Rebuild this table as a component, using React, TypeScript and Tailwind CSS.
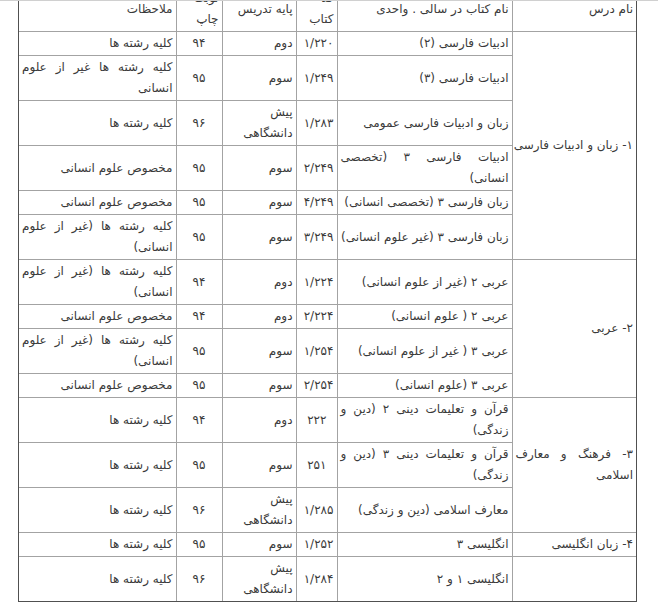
import React from "react";

type Row = {
  book: string[];
  bookJustify?: boolean;
  code: string;
  codePad?: boolean;
  grade: string[];
  print: string;
  note: string[];
};

type Group = { title: string[]; rows: Row[] };

const groups: Group[] = [
  {
    title: ["۱- زبان و ادبیات فارسی"],
    rows: [
      { book: ["ادبیات فارسی (۲)"], code: "۱/۲۲۰", grade: ["دوم"], print: "۹۴", note: ["کلیه رشته ها"] },
      { book: ["ادبیات فارسی (۳)"], code: "۱/۲۴۹", grade: ["سوم"], print: "۹۵", note: ["کلیه رشته ها غیر از علوم", "انسانی"] },
      { book: ["زبان و ادبیات فارسی عمومی"], code: "۱/۲۸۳", grade: ["پیش", "دانشگاهی"], print: "۹۶", note: ["کلیه رشته ها"] },
      { book: ["ادبیات فارسی ۳ (تخصصی", "انسانی)"], code: "۲/۲۴۹", grade: ["سوم"], print: "۹۵", note: ["مخصوص علوم انسانی"] },
      { book: ["زبان فارسی ۳ (تخصصی انسانی)"], code: "۴/۲۴۹", grade: ["سوم"], print: "۹۵", note: ["مخصوص علوم انسانی"] },
      { book: ["زبان فارسی ۳ (غیر علوم انسانی)"], code: "۳/۲۴۹", grade: ["سوم"], print: "۹۵", note: ["کلیه رشته ها (غیر از علوم", "انسانی)"] },
    ],
  },
  {
    title: ["۲- عربی"],
    rows: [
      { book: ["عربی ۲ (غیر از علوم انسانی)"], code: "۱/۲۲۴", grade: ["دوم"], print: "۹۴", note: ["کلیه رشته ها (غیر از علوم", "انسانی)"] },
      { book: ["عربی ۲ ( علوم انسانی)"], code: "۲/۲۲۴", grade: ["دوم"], print: "۹۴", note: ["مخصوص علوم انسانی"] },
      { book: ["عربی ۳ ( غیر از علوم انسانی)"], code: "۱/۲۵۴", grade: ["سوم"], print: "۹۵", note: ["کلیه رشته ها (غیر از علوم", "انسانی)"] },
      { book: ["عربی ۳ (علوم انسانی)"], code: "۲/۲۵۴", grade: ["سوم"], print: "۹۵", note: ["مخصوص علوم انسانی"] },
    ],
  },
  {
    title: ["۳- فرهنگ و معارف", "اسلامی"],
    rows: [
      { book: ["قرآن و تعلیمات دینی ۲ (دین و", "زندگی)"], code: "۲۲۲", codePad: true, grade: ["دوم"], print: "۹۴", note: ["کلیه رشته ها"] },
      { book: ["قرآن و تعلیمات دینی ۳ (دین و", "زندگی)"], code: "۲۵۱", codePad: true, grade: ["سوم"], print: "۹۵", note: ["کلیه رشته ها"] },
      { book: ["معارف اسلامی (دین و زندگی)"], code: "۱/۲۸۵", grade: ["پیش", "دانشگاهی"], print: "۹۶", note: ["کلیه رشته ها"] },
    ],
  },
  {
    title: ["۴- زبان انگلیسی"],
    rows: [
      { book: ["انگلیسی ۳"], code: "۱/۲۵۲", grade: ["سوم"], print: "۹۵", note: ["کلیه رشته ها"] },
    ],
  },
  {
    title: [""],
    rows: [
      { book: ["انگلیسی ۱ و ۲"], code: "۱/۲۸۴", grade: ["پیش", "دانشگاهی"], print: "۹۶", note: ["کلیه رشته ها"] },
    ],
  },
];

function Lines({ lines, justify }: { lines: string[]; justify?: boolean }) {
  return (
    <>
      {lines.map((l, i) => {
        const isLast = i === lines.length - 1;
        return (
          <div
            key={i}
            className={
              justify && !isLast
                ? "whitespace-nowrap text-justify [text-align-last:justify]"
                : "whitespace-nowrap"
            }
          >
            {l}
          </div>
        );
      })}
    </>
  );
}

const cell = "border-b border-l border-[#a3a3a3] px-[3px] py-px align-middle";

export default function App() {
  const totalRows = groups.reduce((a, g) => a + g.rows.length, 0);
  let idx = 0;
  return (
    <div
      className="relative h-[602px] w-[658px] overflow-hidden bg-white text-[#3a3a3a]"
      style={{ fontFamily: '"DejaVu Sans", sans-serif' }}
    >
      <div className="absolute left-0 right-0 top-0 z-10 h-px bg-[#d0d0d0]" />
      <div className="-mt-[14px] ml-[18px] w-[619px] border border-[#505050]">
        <table dir="rtl" className="w-full table-fixed border-collapse text-[12px] leading-[21px]">
          <colgroup>
            <col className="w-[124px]" />
            <col className="w-[175px]" />
            <col className="w-[41px]" />
            <col className="w-[74px]" />
            <col className="w-[46px]" />
            <col />
          </colgroup>
          <thead>
            <tr>
              <td className={`${cell} text-right`}>نام درس</td>
              <td className={`${cell} text-right`}>نام کتاب در سالی . واحدی</td>
              <td className={`${cell} text-right`}>
                <div>کد</div>
                <div>کتاب</div>
              </td>
              <td className={`${cell} text-right`}>پایه تدریس</td>
              <td className={`${cell} text-right`}>
                <div>نوبت</div>
                <div>چاپ</div>
              </td>
              <td className="border-b border-[#a3a3a3] px-[3px] py-px text-right align-middle">ملاحظات</td>
            </tr>
          </thead>
          <tbody>
            {groups.map((g, gi) =>
              g.rows.map((r, ri) => {
                idx++;
                const last = idx === totalRows;
                const bb = last ? "border-b-0" : "";
                const groupLast = gi === groups.length - 1;
                return (
                  <tr key={`${gi}-${ri}`}>
                    {ri === 0 && (
                      <td
                        rowSpan={g.rows.length}
                        className={`${cell} ${groupLast ? "border-b-0" : ""} text-right`}
                      >
                        <Lines lines={g.title} justify />
                      </td>
                    )}
                    <td className={`${cell} ${bb} text-right`}>
                      <Lines lines={r.book} justify />
                    </td>
                    <td className={`${cell} ${bb} text-right ${r.codePad ? "pr-[10px]" : ""}`}>{r.code}</td>
                    <td className={`${cell} ${bb} text-right`}>
                      <Lines lines={r.grade} />
                    </td>
                    <td className={`${cell} ${bb} text-center`}>{r.print}</td>
                    <td className={`border-b border-[#a3a3a3] px-[3px] py-px align-middle ${bb} text-right`}>
                      <Lines lines={r.note} justify />
                    </td>
                  </tr>
                );
              })
            )}
          </tbody>
        </table>
      </div>
    </div>
  );
}
